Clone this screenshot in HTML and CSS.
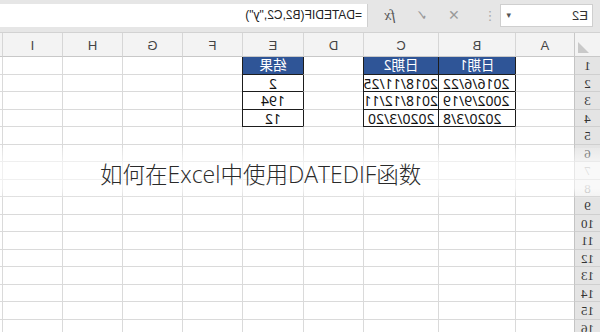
FILE: index.html
```html
<!DOCTYPE html>
<html lang="zh-CN">
<head>
    <meta charset="UTF-8">
    <title>如何在Excel中使用DATEDIF函数</title>
    <link rel="stylesheet" href="styles.css">
</head>
<body>
    <div class="page">
        <div class="sheet">
            <div class="toolbar">
                <div class="namebox">E2<span class="drop">&#9662;</span></div>
                <div class="dots">&#8942;</div>
                <div class="btns">
                    <span class="btn x">&#10005;</span>
                    <span class="btn ok">&#10003;</span>
                    <span class="btn fx">fx</span>
                </div>
                <div class="formula">=DATEDIF(B2,C2,"y")</div>
            </div>
            <div class="grid" id="grid"></div>
        </div>
        <div class="fade"></div>
        <div class="title">如何在<span class="lat">Excel</span>中使用<span class="lat">DATEDIF</span>函数</div>
    </div>
    <script>
        var cols = ['', 'A', 'B', 'C', 'D', 'E', 'F', 'G', 'H', 'I', ''];
        var data = {
            B1: '日期1', C1: '日期2', E1: '结果',
            B2: '2016/6/22', C2: '2018/11/25', E2: '2',
            B3: '2002/9/19', C3: '2018/12/11', E3: '194',
            B4: '2020/3/8', C4: '2020/3/20', E4: '12'
        };
        var grid = document.getElementById('grid');
        var html = '';
        for (var r = 0; r <= 16; r++) {
            for (var c = 0; c < cols.length; c++) {
                var cls = 'cell';
                var text = '';
                if (r === 0 && c === 0) {
                    cls += ' corner';
                } else if (r === 0) {
                    cls += ' colhead';
                    text = cols[c];
                } else if (c === 0) {
                    cls += ' rowhead';
                    if (r === 7 || r === 8) cls += ' faint';
                    text = r;
                } else {
                    var key = cols[c] + r;
                    var next = cols[c + 1] + r;
                    if (data[key] !== undefined) {
                        cls += r === 1 ? ' head' : ' val';
                        if (cols[c] === 'E') cls += ' mid';
                        text = data[key];
                    }
                    if (data[next] !== undefined) cls += ' edge';
                }
                html += '<div class="' + cls + '">' + text + '</div>';
            }
        }
        grid.innerHTML = html;
    </script>
</body>
</html>
```

FILE: styles.css
```css
body {
    margin: 0;
    background: #fff;
    font-family: "Noto Sans", "Noto Sans CJK SC", sans-serif;
}
.page {
    position: relative;
    width: 600px;
    height: 332px;
    overflow: hidden;
}
.sheet {
    width: 600px;
    height: 332px;
    transform: scaleX(-1);
}
.toolbar {
    display: flex;
    align-items: center;
    height: 33px;
    padding-bottom: 2px;
    background: #e6e6e6;
    border-bottom: 1px solid #d2d2d2;
    box-sizing: border-box;
}
.namebox {
    position: relative;
    margin-left: 7px;
    width: 93px;
    height: 23px;
    background: #fff;
    border: 1px solid #cfcfcf;
    box-sizing: border-box;
    font: 13px "Liberation Sans", sans-serif;
    color: #333;
    line-height: 21px;
    padding-left: 4px;
}
.drop {
    position: absolute;
    right: 5px;
    top: 0;
    font-size: 9px;
    color: #555;
}
.dots {
    width: 20px;
    text-align: center;
    color: #aaa;
    font: 13px "DejaVu Sans", sans-serif;
}
.btns {
    display: flex;
    align-items: center;
    justify-content: space-around;
    width: 112px;
    height: 23px;
    padding: 0 6px 0 10px;
    box-sizing: border-box;
}
.btn {
    font: 14px "DejaVu Sans", sans-serif;
    color: #9a9a9a;
}
.btn.fx {
    font: italic 15px "Liberation Serif", serif;
    color: #555;
}
.formula {
    flex: 1;
    height: 23px;
    background: #fff;
    border-left: 1px solid #cfcfcf;
    font: 12px "Liberation Sans", sans-serif;
    color: #222;
    line-height: 23px;
    padding-left: 5px;
}
.grid {
    display: grid;
    grid-template-columns: 26px 59px 77px 75px 60px 61px 60px 60px 60px 60px 20px;
    grid-template-rows: 24px repeat(16, 17.5px);
}
.cell {
    border-right: 1px solid #dadada;
    border-bottom: 1px solid #dadada;
    box-sizing: border-box;
    font-size: 14px;
    color: #111;
    line-height: 17px;
    white-space: nowrap;
}
.corner {
    position: relative;
    background: #f3f3f3;
    border-right-color: #c8c8c8;
    border-bottom-color: #c8c8c8;
}
.corner::after {
    content: "";
    position: absolute;
    right: 3px;
    bottom: 3px;
    border-left: 11px solid transparent;
    border-bottom: 11px solid #c9c9c9;
}
.colhead {
    background: #f3f3f3;
    border-bottom-color: #c8c8c8;
    border-right-color: #d6d6d6;
    text-align: center;
    font: 13px "Liberation Sans", sans-serif;
    color: #444;
    line-height: 25px;
}
.rowhead {
    background: #e4e4e4;
    border-right-color: #c4c4c4;
    border-bottom-color: #cfcfcf;
    text-align: center;
    font: 13px "Liberation Serif", serif;
    color: #333;
    line-height: 17px;
}
.rowhead.faint {
    background: #f1f1f1;
    color: #aaa;
}
.head {
    background: #2f5597;
    color: #fff;
    text-align: center;
    font-size: 13.5px;
    line-height: 16px;
    border-right-color: #1d1d1d;
    border-bottom-color: #1d1d1d;
}
.val {
    text-align: right;
    padding-right: 4px;
    border-right-color: #1d1d1d;
    border-bottom-color: #1d1d1d;
}
.val.mid {
    text-align: center;
    padding-right: 0;
}
.edge {
    border-right-color: #1d1d1d;
}
.fade {
    position: absolute;
    left: 0;
    top: 148px;
    width: 600px;
    height: 50px;
    background: linear-gradient(rgba(255,255,255,0.2), rgba(255,255,255,0.6) 30%, rgba(255,255,255,0.6) 80%, rgba(255,255,255,0.1));
}
.title {
    position: absolute;
    left: 100px;
    top: 158px;
    font: 300 22.5px "Noto Sans CJK SC", sans-serif;
    color: #2a2a2a;
    white-space: nowrap;
    line-height: 30px;
}
.lat {
    font-family: "Open Sans", "Noto Sans", sans-serif;
    font-weight: 300;
    font-size: 23px;
}
```
